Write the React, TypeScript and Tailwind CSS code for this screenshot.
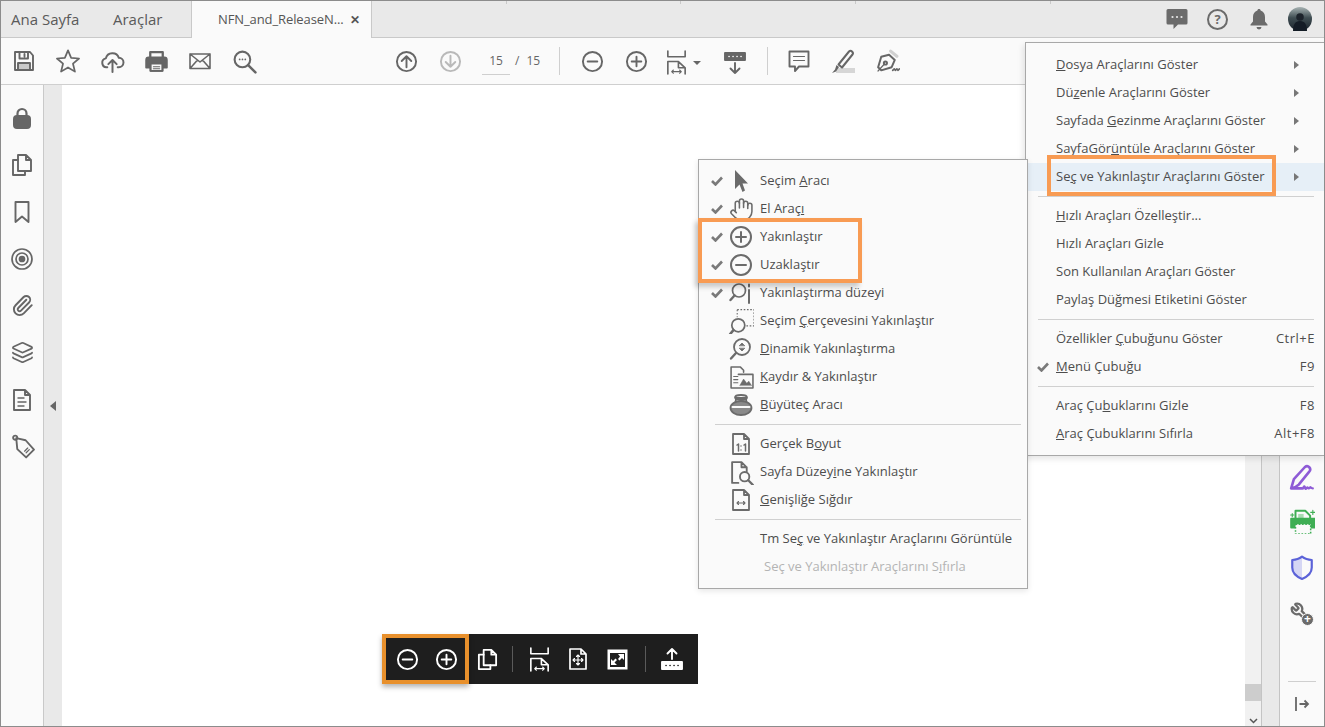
import type { ReactNode } from 'react'
import { Hand, Paperclip, Layers, Wrench } from 'lucide-react'

type IconProps = { size?: number; className?: string }

const Svg = ({ size = 24, sw = 2, vb = '0 0 24 24', className, children }: IconProps & { sw?: number; vb?: string; children: ReactNode }) => (
  <svg width={size} height={size} viewBox={vb} fill="none" stroke="currentColor" strokeWidth={sw} strokeLinecap="round" strokeLinejoin="round" className={className}>
    {children}
  </svg>
)

// toolbar icons
const SaveIcon = () => (
  <Svg sw={1.9}>
    <path d="M6 14.5h12V21H6z" fill="#c9c9c9" stroke="none" />
    <path d="M3 3h15l3 3.5V21H3z" />
    <path d="M7.5 3v6.5h8.5V3M6 21v-7h12v7M12.5 5v2.5" />
  </Svg>
)
const StarIcon = () => (
  <Svg size={26} sw={1.6}>
    <path d="M12 2.2l2.9 6.9 7.3.6-5.6 4.8 1.8 7.3-6.4-3.9-6.4 3.9 1.8-7.3-5.6-4.8 7.3-.6z" />
  </Svg>
)
const CloudUpIcon = () => (
  <Svg size={25} sw={1.9}>
    <path d="M7 17.5H6.2a4.3 4.3 0 0 1-.6-8.5 6.5 6.5 0 0 1 12.5-.5 4.5 4.5 0 0 1-.1 9H17" />
    <path d="M12 22V11M8 14.5L12 10.5l4 4" />
  </Svg>
)
const PrintIcon = () => (
  <Svg size={25} sw={1.6}>
    <path d="M6 8V3h12v5" strokeWidth={2.2} />
    <path d="M4.5 8h15A2.5 2.5 0 0 1 22 10.5V18h-4v3H6v-3H2v-7.5A2.5 2.5 0 0 1 4.5 8z" fill="currentColor" />
    <path d="M6.5 14h11v7h-11z" fill="#fafafa" />
    <path d="M9 17h6M9 19h6" strokeWidth={1.1} />
  </Svg>
)
const MailIcon = () => (
  <Svg sw={1.6}>
    <path d="M2 5h20v14.5H2zM2 5l10 8 10-8M2 19.5l7.5-8.5M22 19.5L14.5 11" />
  </Svg>
)
const SearchDotsIcon = () => (
  <Svg size={25} sw={2}>
    <circle cx="10" cy="10" r="7.5" />
    <path d="M15.5 15.5L22.5 22.5" strokeWidth={2.4} />
    <path d="M7.3 10h.1M10 10h.1M12.7 10h.1" strokeWidth={1.6} />
  </Svg>
)
const ArrowCircle = ({ up }: { up?: boolean }) => (
  <Svg size={23} sw={2}>
    <circle cx="12" cy="12" r="10" />
    {up ? <path d="M12 18V6.5M7 11.5l5-5 5 5" /> : <path d="M12 6v11.5M7 12.5l5 5 5-5" />}
  </Svg>
)
const ZoomOutIcon = ({ size = 23 }: IconProps) => (
  <Svg size={size} sw={2}>
    <circle cx="12" cy="12" r="10" />
    <path d="M7 12h10" />
  </Svg>
)
const ZoomInIcon = ({ size = 23 }: IconProps) => (
  <Svg size={size} sw={2}>
    <circle cx="12" cy="12" r="10" />
    <path d="M7 12h10M12 7v10" />
  </Svg>
)
const FitWidthIcon = () => (
  <Svg size={25} sw={1.7} vb="0 0 24 26">
    <path d="M3 1v6h18V1" />
    <path d="M3 25V12h11l7 6.5V25M14 12v6.5h7" />
    <path d="M7 22.5h10M8.8 20.8L7 22.5l1.8 1.7M15.2 20.8l1.8 1.7-1.8 1.7" strokeWidth={1.1} />
  </Svg>
)
const FitPageIcon = () => (
  <Svg size={24} sw={1.7}>
    <path d="M4 2h11l5 5v15H4zM15 2v5h5" />
    <path d="M12 8v10M7 13h10M10.5 9.5L12 8l1.5 1.5M10.5 16.5L12 18l1.5-1.5M8.5 11.5L7 13l1.5 1.5M15.5 11.5L17 13l-1.5 1.5" strokeWidth={1.1} />
  </Svg>
)
const FullScreenIcon = () => (
  <svg width="21" height="21" viewBox="0 0 21 21">
    <rect x="0.5" y="0.5" width="20" height="20" fill="#fff" />
    <rect x="3" y="4" width="15" height="14" fill="#1e1e1e" />
    <path d="M11 5h6v6l-2-2-2.5 2.5-1.5-1.5L13 7.5zM10 16H4v-6l2 2 2.5-2.5L10 11l-2.5 2.5z" fill="#fff" />
  </svg>
)
const MarkerDownIcon = () => (
  <Svg size={24} sw={1.9}>
    <path d="M2 2h20v7H2z" fill="currentColor" />
    <path d="M6 5.5h.1M10 5.5h.1M14 5.5h.1M18 5.5h.1" stroke="#fafafa" strokeWidth={1.6} />
    <path d="M12 12v10M7.5 17.5L12 22l4.5-4.5" />
  </Svg>
)
const MarkerUpIcon = () => (
  <Svg size={24} sw={1.9}>
    <path d="M2 15h20v7H2z" fill="currentColor" />
    <path d="M6 18.5h.1M10 18.5h.1M14 18.5h.1M18 18.5h.1" stroke="#1e1e1e" strokeWidth={1.6} />
    <path d="M12 12V2M7.5 6.5L12 2l4.5 4.5" />
  </Svg>
)
const CommentIcon = () => (
  <Svg size={24} sw={1.9}>
    <path d="M2.5 2.5h19v15H12l-4 4.5v-4.5H2.5z" />
    <path d="M6.5 7.5h11M6.5 11.5h11" strokeWidth={1.2} />
  </Svg>
)
const HighlightIcon = () => (
  <Svg size={24} sw={2}>
    <path d="M5 19h19v5H5z" fill="#d6d6d6" stroke="none" />
    <path d="M7.5 15.5L18 2.5c1-1 2-1 3 0s1.5 2 .5 3L11 18.5z" />
    <path d="M1 24l4-1.500 3-4.500-2.500-2-1.500 4.500z" fill="currentColor" stroke="none" />
  </Svg>
)
const SignIcon = () => (
  <Svg size={25} sw={1.9}>
    <path d="M15 2l6 5" stroke="#d0d0d0" strokeWidth={3} />
    <path d="M13.5 5.5L19 10.5l-3 7-10 3-3-3 3-10z" />
    <path d="M3 21l5.5-6" strokeWidth={1.4} />
    <circle cx="10" cy="13.5" r="1.5" />
    <path d="M17 20.5l1.5-1.5 1 1.5 1.5-1.5 1 1.5 1.5-1.5" strokeWidth={1.6} />
  </Svg>
)
const PagesIcon = ({ size = 24 }: IconProps) => (
  <Svg size={size} sw={1.9}>
    <path d="M8 2h8l5 5v11H8zM16 2v5h5" />
    <path d="M8 7H3v15h12v-4" />
  </Svg>
)

// left rail icons
const LockIcon = () => (
  <Svg sw={2}>
    <path d="M7.5 11V7.5a4.5 4.5 0 0 1 9 0V11" strokeWidth={2.2} />
    <rect x="4" y="10" width="16" height="12" rx="3" fill="currentColor" />
  </Svg>
)
const BookmarkIcon = () => (
  <Svg sw={1.9}>
    <path d="M5.5 2h13v20L12 16.5 5.5 22z" />
  </Svg>
)
const TargetIcon = () => (
  <Svg sw={1.7}>
    <circle cx="12" cy="12" r="10" />
    <circle cx="12" cy="12" r="6" />
    <circle cx="12" cy="12" r="2.5" fill="currentColor" />
  </Svg>
)
const DocLinesIcon = () => (
  <Svg sw={1.9}>
    <path d="M4 2h11l5 5v15H4zM15 2v5h5" />
    <path d="M8 10h6M8 14h8M8 18h6" strokeWidth={1.4} />
  </Svg>
)
const TagIcon = () => (
  <Svg size={25} sw={1.8}>
    <path d="M6 4l9 2 8 9-7.5 7.5-8.5-8z" />
    <circle cx="5" cy="3.5" r="2" />
    <path d="M14 16.5l3-3M15.5 18l3-3" strokeWidth={1.2} />
  </Svg>
)

// menu icons
const CursorIcon = () => (
  <svg width="20" height="24" viewBox="0 0 20 24">
    <path d="M4 1l13 13.5h-5.5l2.5 7-2.5 1.5-3-7.5L4 20z" fill="currentColor" />
  </svg>
)
const ZoomLevelIcon = () => (
  <Svg size={24} sw={1.7}>
    <circle cx="10" cy="9.5" r="6.5" />
    <path d="M5.5 14.5L1.5 19" strokeWidth={2.4} />
    <path d="M20 3.5v2M20 9v13" strokeWidth={2} />
  </Svg>
)
const MarqueeZoomIcon = () => (
  <Svg size={26} sw={1.6}>
    <path d="M8.5 1.5h15.500v15H17" strokeDasharray="1.5 1.5" strokeLinecap="butt" strokeWidth={1} />
    <path d="M8.5 1.5v7" strokeDasharray="1.5 1.5" strokeLinecap="butt" strokeWidth={1} />
    <circle cx="9.5" cy="16" r="6" />
    <path d="M5 20.5L2 24" strokeWidth={2.4} />
  </Svg>
)
const DynamicZoomIcon = () => (
  <Svg size={24} sw={1.8}>
    <circle cx="13" cy="10" r="8" />
    <path d="M7 16l-5 5.5" strokeWidth={2.4} />
    <path d="M10.5 8.5L13 6l2.5 2.5zM10.5 11.5L13 14l2.5-2.5z" fill="currentColor" strokeWidth={0.8} />
  </Svg>
)
const PanZoomIcon = () => (
  <Svg size={25} sw={1.5}>
    <path d="M2 22V2h9l3 3v2M2 22h21V9H9" />
    <path d="M4.5 11h4M4.5 14h4M4.5 17h4" strokeWidth={1.1} />
    <path d="M10.5 19.5l3.5-6 3 4 2-2 2.5 4z" fill="currentColor" strokeWidth={0.5} />
  </Svg>
)
const LoupeIcon = () => (
  <Svg size={24} sw={1.8}>
    <path d="M6 10c.8-1.5 1-3 1-5h10c0 2 .2 3.5 1 5" />
    <ellipse cx="12" cy="4.5" rx="6" ry="2.5" />
    <ellipse cx="12" cy="15" rx="10.500" ry="7" fill="#8a8a8a" />
    <path d="M3.5 14h17" stroke="#fafafa" strokeWidth={2} />
  </Svg>
)
const ActualSizeIcon = () => (
  <Svg size={24} sw={1.8}>
    <path d="M4 2h11l5 5v15H4zM15 2v5h5" />
    <path d="M8 13l1.5-1v7M15 13l1.5-1v7" strokeWidth={1.5} />
    <path d="M12 14v.1M12 18v.1" strokeWidth={1.5} />
  </Svg>
)
const FitZoomIcon = () => (
  <Svg size={25} sw={1.8}>
    <path d="M9 22H3V2h9l5 5v4M12 2v5h5" />
    <circle cx="15" cy="16" r="4.5" />
    <path d="M18.5 19.5L23 24" strokeWidth={2.2} />
  </Svg>
)
const FitWidthDocIcon = () => (
  <Svg size={24} sw={1.8}>
    <path d="M4 2h11l5 5v15H4zM15 2v5h5" />
    <path d="M8 15h8M9.5 13.5L8 15l1.5 1.5M14.5 13.5L16 15l-1.5 1.5" strokeWidth={1.1} />
  </Svg>
)

// right rail icons
const PurpleSignIcon = () => (
  <Svg size={26} sw={2.4}>
    <path d="M2 22.5L4.5 14 14.5 3c1.500-1.300 3-1.300 4.200 0s1.100 2.800 0 4L9 19c-2 2-4.500 3-7 3.500h10" />
    <path d="M13 22.500c.5-2 1.500-3 2 0 .5 1.500 1.500-1 2-1s.5 1.500 1.500 1 1-1.500 1.500-1 .5 1 2 1" strokeWidth={2} />
  </Svg>
)
const GreenPrintIcon = () => (
  <Svg size={26} sw={1.8}>
    <path d="M6 10V2.5h9l4.5 4.5v3" />
    <path d="M8.5 5.5l5 0v5H8.5z" fill="#a8dcb2" stroke="none" />
    <path d="M2 10h22v8H2z" fill="currentColor" />
    <path d="M6 15h14v9H6z" fill="#fafafa" strokeDasharray="1.5 1.5" strokeLinecap="butt" strokeWidth={1.4} />
    <path d="M22 2v4M20 4h4M3 5v3M1.5 6.5h3" strokeWidth={1} />
  </Svg>
)
const ShieldIcon = () => (
  <Svg size={26} sw={2}>
    <path d="M12 2.5c-2.500 2-6 3-9 3v7c0 5 4 8.500 9 10.500z" fill="#d5d6f4" stroke="none" />
    <path d="M12 2.5c2.500 2 6 3 9 3v7c0 5-4 8.500-9 10.500-5-2-9-5.500-9-10.500v-7c3 0 6.500-1 9-3z" />
  </Svg>
)
const ToolsAddIcon = () => (
  <div className="relative h-[24px] w-[24px]">
    <Wrench size={21} strokeWidth={2.6} className="-scale-x-100" />
    <div className="absolute bottom-0 right-0 flex h-[13px] w-[13px] items-center justify-center rounded-full border border-[#fafafa] bg-[#6b6b6b] text-[12px] font-bold leading-none text-white">+</div>
  </div>
)

const Tri = ({ className }: { className: string }) => <div className={className} />

type SubItem = { check?: boolean; icon?: ReactNode; label: ReactNode; disabled?: boolean }

const subGroups: SubItem[][] = [
  [
    { check: true, icon: <CursorIcon />, label: <>Seçim <u>A</u>racı</> },
    { check: true, icon: <Hand size={25} strokeWidth={1.5} />, label: <>El Araç<u>ı</u></> },
    { check: true, icon: <ZoomInIcon size={24} />, label: 'Yakınlaştır' },
    { check: true, icon: <ZoomOutIcon size={24} />, label: 'Uzaklaştır' },
    { check: true, icon: <ZoomLevelIcon />, label: 'Yakınlaştırma düzeyi' },
    { icon: <MarqueeZoomIcon />, label: <>Seçim <u>Ç</u>erçevesini Yakınlaştır</> },
    { icon: <DynamicZoomIcon />, label: <><u>D</u>inamik Yakınlaştırma</> },
    { icon: <PanZoomIcon />, label: <><u>K</u>aydır &amp; Yakınlaştır</> },
    { icon: <LoupeIcon />, label: <><u>B</u>üyüteç Aracı</> },
  ],
  [
    { icon: <ActualSizeIcon />, label: <>Gerçek B<u>o</u>yut</> },
    { icon: <FitZoomIcon />, label: <>Sayfa Düzey<u>i</u>ne Yakınlaştır</> },
    { icon: <FitWidthDocIcon />, label: <><u>G</u>enişliğe Sığdır</> },
  ],
  [
    { label: <>Tm Se<u>ç</u> ve Yakınlaştır Araçlarını Görüntüle</> },
    { label: <>Seç ve Yakınlaştır Araçlarını S<u>ı</u>fırla</>, disabled: true },
  ],
]

type MainItem = { label: ReactNode; arrow?: boolean; check?: boolean; keys?: string; active?: boolean }

const mainGroups: MainItem[][] = [
  [
    { label: <><u>D</u>osya Araçlarını Göster</>, arrow: true },
    { label: <>Dü<u>z</u>enle Araçlarını Göster</>, arrow: true },
    { label: <>Sayfada <u>G</u>ezinme Araçlarını Göster</>, arrow: true },
    { label: <>SayfaGör<u>ü</u>ntüle Araçlarını Göster</>, arrow: true },
    { label: <>Se<u>ç</u> ve Yakınlaştır Araçlarını Göster</>, arrow: true, active: true },
  ],
  [
    { label: <><u>H</u>ızlı Araçları Özelleştir...</> },
    { label: 'Hızlı Araçları Gizle' },
    { label: 'Son Kullanılan Araçları Göster' },
    { label: 'Paylaş Düğmesi Etiketini Göster' },
  ],
  [
    { label: <>Özellikler <u>Ç</u>ubuğunu Göster</>, keys: 'Ctrl+E' },
    { label: <><u>M</u>enü Çubuğu</>, keys: 'F9', check: true },
  ],
  [
    { label: <>Araç Çu<u>b</u>uklarını Gizle</>, keys: 'F8' },
    { label: <><u>A</u>raç Çubuklarını Sıfırla</>, keys: 'Alt+F8' },
  ],
]

const Check = () => (
  <svg width="12" height="10" viewBox="0 0 12 10" fill="none" stroke="#7a7a7a" strokeWidth="2.6">
    <path d="M1 5l3.5 3.5L11 1.5" />
  </svg>
)

const Slot = ({ children }: { children: ReactNode }) => (
  <div className="flex h-full w-[44px] items-center justify-center text-[#666666]">{children}</div>
)

const RailSlot = ({ children }: { children: ReactNode }) => (
  <div className="flex h-[47px] items-center justify-center">{children}</div>
)

export default function App() {
  return (
    <div className="relative flex h-[727px] w-[1325px] flex-col overflow-hidden border border-[#8c8c8c] bg-white font-['Open_Sans',sans-serif] text-[#4d4d4d]">
      {/* Tab bar */}
      <div className="flex h-[37px] shrink-0 items-stretch border-b border-[#c9c9c9] bg-[#e9e9e9]">
        <div className="ml-[10px] flex w-[102px] items-center text-[15px] text-[#5a5a5a]">Ana Sayfa</div>
        <div className="flex w-[78px] items-center text-[15px] text-[#5a5a5a]">Araçlar</div>
        <div className="-mb-px flex w-[181px] items-center border-x border-[#c9c9c9] bg-[#fafafa] pl-[26px] text-[13px] text-[#555555]">
          <span className="w-[132px] tracking-[-0.1px]">NFN_and_ReleaseN...</span>
          <span className="text-[12px] font-bold leading-none">✕</span>
        </div>
        <div className="ml-[134px] h-[3px] w-px bg-[#c9c9c9]" />
        <div className="ml-[173px] h-[3px] w-px bg-[#c9c9c9]" />
        <div className="ml-[174px] h-[3px] w-px bg-[#c9c9c9]" />
        <div className="ml-[194px] h-[3px] w-px bg-[#c9c9c9]" />
        <div className="ml-auto flex items-center pr-[12px] text-[#6b6b6b]">
          <svg width="22" height="22" viewBox="0 0 22 22">
            <path d="M2 1h18a1.5 1.5 0 0 1 1.5 1.5V15a1.5 1.5 0 0 1-1.5 1.5H12L7.5 21v-4.5H2A1.5 1.5 0 0 1 .5 15V2.5A1.5 1.5 0 0 1 2 1z" fill="currentColor" />
            <circle cx="6.5" cy="9" r="1.1" fill="#e9e9e9" />
            <circle cx="11" cy="9" r="1.1" fill="#e9e9e9" />
            <circle cx="15.5" cy="9" r="1.1" fill="#e9e9e9" />
          </svg>
          <div className="ml-[19px] flex h-[21px] w-[21px] items-center justify-center rounded-full border-2 border-[#6b6b6b] text-[13px] font-bold leading-none">?</div>
          <svg width="18" height="22" viewBox="0 0 18 22" className="ml-[22px]">
            <path d="M9 1c1 0 1.6.7 1.6 1.6C13.5 3.4 15 6 15 9v4.5l2.5 3v1H.5v-1L3 13.5V9c0-3 1.5-5.6 4.4-6.4C7.4 1.7 8 1 9 1z" fill="currentColor" />
            <path d="M6.5 19h5a2.5 2.5 0 0 1-5 0z" fill="currentColor" />
          </svg>
          <svg width="24" height="24" viewBox="0 0 24 24" className="ml-[20px]">
            <defs>
              <linearGradient id="sky" x1="0" y1="0" x2="0" y2="1">
                <stop offset="0" stopColor="#a8b4b4" />
                <stop offset="0.45" stopColor="#3f4d52" />
                <stop offset="1" stopColor="#1a232c" />
              </linearGradient>
            </defs>
            <circle cx="12" cy="12" r="12" fill="url(#sky)" />
            <path d="M5 24c0-6 2-10 7-10s7 4 7 10z" fill="#141c26" />
            <circle cx="12" cy="10" r="3.8" fill="#1c232b" />
          </svg>
        </div>
      </div>

      {/* Toolbar */}
      <div className="flex h-[47px] shrink-0 items-center border-b border-[#cfcfcf] bg-[#fafafa] pl-[1px]">
        <Slot><SaveIcon /></Slot>
        <Slot><StarIcon /></Slot>
        <Slot><CloudUpIcon /></Slot>
        <Slot><PrintIcon /></Slot>
        <Slot><MailIcon /></Slot>
        <Slot><SearchDotsIcon /></Slot>
        <div className="ml-[118px]" />
        <Slot><ArrowCircle up /></Slot>
        <div className="flex h-full w-[44px] items-center justify-center text-[#b9b9b9]"><ArrowCircle /></div>
        <div className="ml-[10px] flex h-[28px] w-[28px] items-center justify-center border-b border-[#cfcfcf] text-[12px] text-[#666666]">15</div>
        <span className="ml-[5px] text-[12px] text-[#666666]">/</span>
        <span className="ml-[7px] text-[12px] text-[#666666]">15</span>
        <div className="ml-[19px] h-[28px] w-px bg-[#cfcfcf]" />
        <div className="ml-[10px]" />
        <Slot><ZoomOutIcon /></Slot>
        <Slot><ZoomInIcon /></Slot>
        <div className="ml-[6px] mt-[3px] flex w-[44px] items-center text-[#666666]">
          <FitWidthIcon />
          <Tri className="ml-[4px] h-0 w-0 border-x-[4px] border-t-[4px] border-x-transparent border-t-[#666666]" />
        </div>
        <div className="ml-[15px] mt-[3px] text-[#666666]"><MarkerDownIcon /></div>
        <div className="ml-[20px] h-[28px] w-px bg-[#cfcfcf]" />
        <div className="ml-[9px]" />
        <Slot><CommentIcon /></Slot>
        <Slot><HighlightIcon /></Slot>
        <Slot><SignIcon /></Slot>
      </div>

      {/* Body */}
      <div className="flex min-h-0 flex-1">
        <div className="w-[43px] shrink-0 border-r border-[#c9c9c9] bg-[#fafafa] pt-[9px] text-[#666666]">
          <RailSlot><LockIcon /></RailSlot>
          <RailSlot><PagesIcon /></RailSlot>
          <RailSlot><BookmarkIcon /></RailSlot>
          <RailSlot><TargetIcon /></RailSlot>
          <RailSlot><Paperclip size={23} strokeWidth={2} /></RailSlot>
          <RailSlot><Layers size={23} strokeWidth={1.8} /></RailSlot>
          <RailSlot><DocLinesIcon /></RailSlot>
          <RailSlot><TagIcon /></RailSlot>
        </div>
        <div className="flex w-[18px] shrink-0 items-center justify-center bg-[#e9e9e9]">
          <Tri className="h-0 w-0 border-y-[5px] border-r-[6px] border-y-transparent border-r-[#666666]" />
        </div>
        <div className="flex-1 bg-white" />
        <div className="flex w-[16px] shrink-0 flex-col items-stretch justify-end bg-[#f1f1f1]">
          <div className="h-[17px] bg-[#cdcdcd]" />
          <div className="flex h-[25px] items-end justify-center pb-[2px]">
            <svg width="9" height="6" viewBox="0 0 9 6" fill="none" stroke="#555555" strokeWidth="1.5">
              <path d="M1 1l3.5 3.5L8 1" />
            </svg>
          </div>
        </div>
        <div className="w-[19px] shrink-0 border-x border-[#c4c4c4] bg-[#e9e9e9]" />
        <div className="flex w-[44px] shrink-0 flex-col items-center bg-[#fafafa]">
          <div className="mt-[325px] flex h-[44px] items-end justify-center text-[#8e5bd6]"><PurpleSignIcon /></div>
          <div className="mt-[1px] flex h-[44px] items-center justify-center text-[#8e5bd6]"><PurpleSignIcon /></div>
          <div className="flex h-[44px] items-center justify-center text-[#3fae54]"><GreenPrintIcon /></div>
          <div className="flex h-[47px] items-center justify-center text-[#5b62d8]"><ShieldIcon /></div>
          <div className="flex h-[47px] items-center justify-center text-[#6b6b6b]"><ToolsAddIcon /></div>
          <div className="mt-auto h-px w-[28px] bg-[#cfcfcf]" />
          <div className="flex h-[44px] items-center justify-center text-[#666666]">
            <svg width="16" height="16" viewBox="0 0 16 16" fill="none" stroke="currentColor" strokeWidth="1.8">
              <path d="M2 1v14M5.5 8H14M10.5 4.5L14 8l-3.5 3.5" />
            </svg>
          </div>
        </div>
      </div>

      {/* Toolbar options menu */}
      <div className="absolute left-[1024px] top-[41px] w-[301px] border border-[#a8a8a8] bg-[#fafafa] pb-[7px] pt-[8px] text-[13px] shadow-[-2px_3px_6px_rgba(0,0,0,0.1)]">
        {mainGroups.map((group, g) => (
          <div key={g}>
            {g > 0 && <div className="ml-[12px] mr-[11px] my-[5px] h-px bg-[#d0d0d0]" />}
            {group.map((item, i) => (
              <div key={i} className={`flex h-[28px] items-center ${item.active ? 'bg-[#e6eff7]' : ''}`}>
                <div className="flex w-[30px] justify-end pr-[7px]">{item.check && <Check />}</div>
                <span className="whitespace-nowrap">{item.label}</span>
                {item.keys && <span className="ml-auto pr-[10px] tracking-[0.5px]">{item.keys}</span>}
                {item.arrow && <Tri className="ml-auto mr-[26px] h-0 w-0 border-y-[4px] border-l-[5px] border-y-transparent border-l-[#777777]" />}
              </div>
            ))}
          </div>
        ))}
      </div>

      {/* Select & zoom submenu */}
      <div className="absolute left-[697px] top-[158px] w-[330px] border border-[#a8a8a8] bg-[#fafafa] py-[7px] text-[13px] shadow-[0_2px_6px_rgba(0,0,0,0.1)]">
        {subGroups.map((group, g) => (
          <div key={g}>
            {g > 0 && <div className="ml-[16px] mr-[6px] my-[5px] h-px bg-[#d0d0d0]" />}
            {group.map((item, i) => (
              <div key={i} className="flex h-[28px] items-center pl-[12px]">
                <div className="w-[16px]">{item.check && <Check />}</div>
                <div className="flex w-[28px] items-center justify-center text-[#6b6b6b]">{item.icon}</div>
                <span className={`ml-[5px] whitespace-nowrap ${item.disabled ? 'pl-[4px] text-[#b4b4b4]' : ''}`}>{item.label}</span>
              </div>
            ))}
          </div>
        ))}
      </div>

      {/* Orange callouts */}
      <div className="absolute left-[1046px] top-[154px] h-[41px] w-[229px] border-[4px] border-[#f89b53]" />
      <div className="absolute left-[697px] top-[217px] h-[65px] w-[164px] border-[4px] border-[#f89b53] shadow-[-3px_4px_5px_rgba(0,0,0,0.2)]" />

      {/* Floating zoom bar */}
      <div className="absolute left-[381px] top-[633px] flex h-[50px] w-[316px] items-center bg-[#1e1e1e] text-white">
        <div className="flex h-full w-[87px] shrink-0 items-center justify-center gap-[16px] border-[4px] border-[#e8902c] pl-[2px] shadow-[0_3px_5px_rgba(0,0,0,0.3)]">
          <ZoomOutIcon />
          <ZoomInIcon />
        </div>
        <div className="ml-[7px]"><PagesIcon size={23} /></div>
        <div className="ml-[13px] h-[26px] w-px bg-[#5a5a5a]" />
        <div className="ml-[14px]"><FitWidthIcon /></div>
        <div className="ml-[14px]"><FitPageIcon /></div>
        <div className="ml-[17px]"><FullScreenIcon /></div>
        <div className="ml-[17px] h-[26px] w-px bg-[#5a5a5a]" />
        <div className="ml-[14px]"><MarkerUpIcon /></div>
      </div>
    </div>
  )
}
